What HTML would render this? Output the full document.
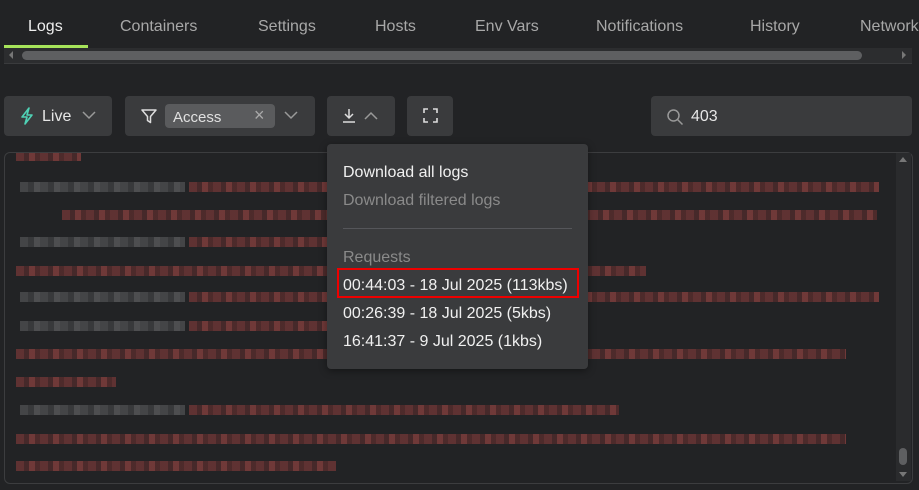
<!DOCTYPE html>
<html><head><style>
body{margin:0;width:919px;height:490px;background:#222325;font-family:"Liberation Sans",sans-serif;overflow:hidden;position:relative;color:#ddd}
.a{position:absolute}
.tab{position:absolute;top:18px;font-size:16px;color:#a8a8a8}
.btn{position:absolute;top:96px;height:40px;background:#3a3b3d;border-radius:4px}
.bar{position:absolute;height:10px;opacity:.85}
.g{background:repeating-linear-gradient(90deg,#4a4b4d 0 8px,#3c3d3f 8px 14px,#555658 14px 20px)}
.r{background:repeating-linear-gradient(90deg,#6a3535 0 8px,#4d2a2b 8px 13px,#7d3d3c 13px 19px,#552c2c 19px 24px)}
.menu{font-size:16px;position:absolute;left:343px}
</style></head><body>
<div class="tab" style="left:28px;color:#eee">Logs</div>
<div class="tab" style="left:120px">Containers</div>
<div class="tab" style="left:258px">Settings</div>
<div class="tab" style="left:375px">Hosts</div>
<div class="tab" style="left:475px">Env Vars</div>
<div class="tab" style="left:596px">Notifications</div>
<div class="tab" style="left:750px">History</div>
<div class="tab" style="left:860px">Network</div>
<div class="a" style="left:4px;top:45px;width:84px;height:3px;background:#a6e35a"></div>
<div class="a" style="left:4px;top:48px;width:908px;height:15px;background:#2c2d2f;border-bottom:1px solid #3a3b3d"></div>
<div class="a" style="left:22px;top:51px;width:840px;height:9px;background:#5e5f61;border-radius:5px"></div>
<div class="a" style="left:9px;top:51px;width:0;height:0;border:4px solid transparent;border-right-color:#777;border-left:0"></div>
<div class="a" style="left:902px;top:51px;width:0;height:0;border:4px solid transparent;border-left-color:#777;border-right:0"></div>

<div class="btn" style="left:4px;width:108px"></div>
<svg class="a" style="left:20px;top:107px" width="14" height="18" viewBox="0 0 14 18"><path d="M9 1L2 10h5l-2 7 7-9H7z" fill="none" stroke="#4fd1b5" stroke-width="1.6" stroke-linejoin="round"/></svg>
<div class="a" style="left:42px;top:108px;font-size:16px;color:#e6e6e6">Live</div>
<svg class="a" style="left:82px;top:111px" width="14" height="9"><path d="M1 1l6 6 6-6" fill="none" stroke="#999" stroke-width="1.5"/></svg>
<div class="btn" style="left:125px;width:190px"></div>
<svg class="a" style="left:141px;top:108px" width="16" height="16"><path d="M1 2h14l-5.5 6.5v6l-3-2v-4z" fill="none" stroke="#ddd" stroke-width="1.5" stroke-linejoin="round"/></svg>
<div class="a" style="left:165px;top:104px;width:110px;height:24px;background:#5a5b5d;border-radius:4px"></div>
<div class="a" style="left:173px;top:109px;font-size:15px;color:#e0e0e0">Access</div>
<div class="a" style="left:254px;top:105px;font-size:18px;color:#aaa">×</div>
<svg class="a" style="left:284px;top:111px" width="14" height="9"><path d="M1 1l6 6 6-6" fill="none" stroke="#999" stroke-width="1.5"/></svg>
<div class="btn" style="left:327px;width:68px"></div>
<svg class="a" style="left:342px;top:108px" width="14" height="16"><path d="M7 1v9M3 6l4 4 4-4M1 14h12" fill="none" stroke="#ddd" stroke-width="1.5"/></svg>
<svg class="a" style="left:364px;top:111px" width="14" height="9"><path d="M1 8l6-6 6 6" fill="none" stroke="#999" stroke-width="1.5"/></svg>
<div class="btn" style="left:407px;width:46px"></div>
<svg class="a" style="left:423px;top:108px" width="15" height="15"><path d="M1 5V1h4M10 1h4v4M14 10v4h-4M5 14H1v-4" fill="none" stroke="#ddd" stroke-width="1.6"/></svg>
<div class="btn" style="left:651px;width:261px"></div>
<svg class="a" style="left:666px;top:108px" width="18" height="18"><circle cx="7.5" cy="7.5" r="5.5" fill="none" stroke="#999" stroke-width="1.5"/><path d="M11.5 11.5l5 5" stroke="#999" stroke-width="1.5"/></svg>
<div class="a" style="left:691px;top:108px;font-size:16px;color:#e6e6e6">403</div>

<div class="a" style="left:4px;top:152px;width:907px;height:330px;border:1px solid #3c3d3f;border-radius:6px"></div>
<div class="a" style="left:896px;top:153px;width:15px;height:328px;background:#2a2b2d"></div>
<div class="a" style="left:899px;top:448px;width:8px;height:17px;background:#5e5f61;border-radius:4px"></div>
<div class="a" style="left:899px;top:157px;border:4px solid transparent;border-bottom:5px solid #777;border-top:0"></div>
<div class="a" style="left:899px;top:472px;border:4px solid transparent;border-top:5px solid #777;border-bottom:0"></div>

<div class="bar r" style="left:16px;top:153px;width:65px;height:8px"></div>
<div class="bar g" style="left:20px;top:182px;width:165px"></div><div class="bar r" style="left:189px;top:182px;width:690px"></div>
<div class="bar r" style="left:62px;top:210px;width:815px"></div>
<div class="bar g" style="left:20px;top:237px;width:165px"></div><div class="bar r" style="left:189px;top:237px;width:250px"></div>
<div class="bar r" style="left:16px;top:266px;width:630px"></div>
<div class="bar g" style="left:20px;top:292px;width:165px"></div><div class="bar r" style="left:189px;top:292px;width:690px"></div>
<div class="bar g" style="left:20px;top:321px;width:165px"></div><div class="bar r" style="left:189px;top:321px;width:230px"></div>
<div class="bar r" style="left:16px;top:349px;width:830px"></div>
<div class="bar r" style="left:16px;top:377px;width:100px"></div>
<div class="bar g" style="left:20px;top:405px;width:165px"></div><div class="bar r" style="left:189px;top:405px;width:430px"></div>
<div class="bar r" style="left:16px;top:434px;width:830px"></div>
<div class="bar r" style="left:16px;top:461px;width:320px"></div>

<div class="a" style="left:327px;top:144px;width:261px;height:225px;background:#3a3b3d;border-radius:4px;box-shadow:0 2px 8px rgba(0,0,0,.4)"></div>
<div class="menu" style="top:164px;color:#f0f0f0">Download all logs</div>
<div class="menu" style="top:192px;color:#8a8a8a">Download filtered logs</div>
<div class="a" style="left:343px;top:228px;width:229px;height:1px;background:#55565a"></div>
<div class="menu" style="top:249px;color:#8a8a8a">Requests</div>
<div class="a" style="left:337px;top:268px;width:242px;height:30px;border:2px solid #e00;box-sizing:border-box"></div>
<div class="menu" style="top:277px;color:#f0f0f0">00:44:03 - 18 Jul 2025 (113kbs)</div>
<div class="menu" style="top:305px;color:#f0f0f0">00:26:39 - 18 Jul 2025 (5kbs)</div>
<div class="menu" style="top:333px;color:#f0f0f0">16:41:37 - 9 Jul 2025 (1kbs)</div>
</body></html>
